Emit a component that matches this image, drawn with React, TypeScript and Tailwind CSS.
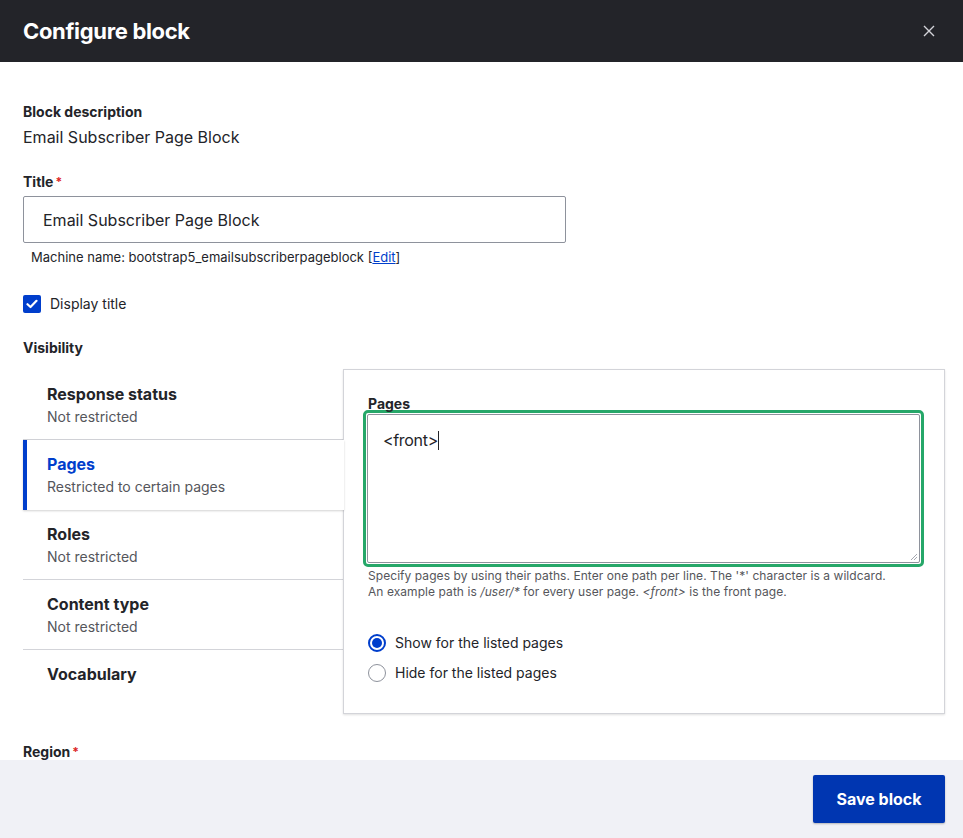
import React from 'react'

const tabs = [
  { title: 'Response status', summary: 'Not restricted' },
  { title: 'Pages', summary: 'Restricted to certain pages', active: true },
  { title: 'Roles', summary: 'Not restricted' },
  { title: 'Content type', summary: 'Not restricted' },
  { title: 'Vocabulary', summary: '' },
]

function Tab({ title, summary, active, last }: { title: string; summary: string; active?: boolean; last?: boolean }) {
  if (active) {
    return (
      <div className="relative z-10 h-[70px] bg-white border-l-4 border-[#003ecc] pl-5 pt-[14px] shadow-[0_1px_2px_rgba(0,0,0,0.18)] -mr-px">
        <div className="text-[16px] font-bold leading-[20px] text-[#003ecc]">{title}</div>
        <div className="text-[14px] leading-[20px] text-[#55565b] mt-[3px]">{summary}</div>
      </div>
    )
  }
  return (
    <div className={`h-[70px] pl-6 pt-[14px] ${last ? '' : 'border-b border-[#d3d4d9]'}`}>
      <div className="text-[16px] font-bold leading-[20px] text-[#232429]">{title}</div>
      {summary && <div className="text-[14px] leading-[20px] text-[#55565b] mt-[3px]">{summary}</div>}
    </div>
  )
}

export default function App() {
  return (
    <div className="w-[963px] h-[838px] flex flex-col bg-white text-[#232429] font-['Inter',sans-serif] overflow-hidden">
      {/* Header */}
      <div className="h-[62px] shrink-0 bg-[#232429] flex items-center justify-between pl-[23px] pr-[28px]">
        <h1 className="text-[22px] font-bold text-white tracking-[-0.015em]">Configure block</h1>
        <svg width="12" height="12" viewBox="0 0 12 12" className="text-[#d3d4d9]">
          <path d="M1 1L11 11M11 1L1 11" stroke="currentColor" strokeWidth="1.4" />
        </svg>
      </div>

      {/* Body */}
      <div className="flex-1 overflow-hidden px-[23px] pt-[40px]">
        <div className="text-[14px] font-bold leading-[20px]">Block description</div>
        <div className="text-[16px] leading-[20px] mt-[5px]">Email Subscriber Page Block</div>

        <div className="mt-[25px] text-[14px] font-bold leading-[20px] flex items-start">
          Title<span className="text-[#dc2323] ml-[2px] text-[12px]">*</span>
        </div>
        <div className="mt-[4px] w-[543px] h-[47px] border border-[#8e929c] rounded-[2px] flex items-center pl-[19px] text-[16px]">
          Email Subscriber Page Block
        </div>
        <div className="mt-[5px] ml-[8px] text-[13px] leading-[18px]">
          Machine name: bootstrap5_emailsubscriberpageblock [<span className="text-[#003ecc] underline">Edit</span>]
        </div>

        <div className="mt-[27px] flex items-center gap-[9px]">
          <div className="w-[18px] h-[18px] rounded-[2px] bg-[#003ecc] flex items-center justify-center">
            <svg width="12" height="10" viewBox="0 0 12 10">
              <path d="M1.5 5.2L4.5 8L10.5 1.8" fill="none" stroke="white" strokeWidth="2.2" strokeLinecap="round" strokeLinejoin="round" />
            </svg>
          </div>
          <span className="text-[14px]">Display title</span>
        </div>

        <div className="mt-[24px] text-[14px] font-bold leading-[20px]">Visibility</div>

        {/* Vertical tabs */}
        <div className="mt-[12px] flex">
          <div className="w-[320px] shrink-0">
            {tabs.map((t, i) => (
              <Tab key={t.title} {...t} last={i === tabs.length - 1} />
            ))}
          </div>
          <div className="flex-1 h-[345px] -mt-px border border-[#d3d4d9] bg-white shadow-[0_1px_2px_rgba(0,0,0,0.12)] pl-[24px] pr-[20px] pt-[25px]">
            <div className="text-[14px] font-bold leading-[18px]">Pages</div>
            <div className="-mt-[3px] -ml-[5px] w-[561px] h-[157px] border-[3px] border-[#26a769] rounded-[5px] p-px">
              <div className="relative w-full h-full border border-[#8e929c] rounded-[2px] pl-[15px] pt-[13px] text-[16px] tracking-[-0.02em]">
                &lt;front&gt;<span className="inline-block w-px h-[19px] bg-[#232429] align-[-4px]" />
                <svg width="8" height="8" viewBox="0 0 8 8" className="absolute right-[1px] bottom-[1px]">
                  <path d="M7 1L1 7M7 4L4 7" stroke="#8e929c" strokeWidth="0.8" />
                </svg>
              </div>
            </div>
            <div className="mt-[1px] text-[12px] leading-[16px] text-[#55565b] tracking-[0.005em]">
              Specify pages by using their paths. Enter one path per line. The '*' character is a wildcard.
              <br />
              An example path is <em>/user/*</em> for every user page. <em>&lt;front&gt;</em> is the front page.
            </div>

            <div className="mt-[33px] flex flex-col gap-[10px]">
              <div className="flex items-center gap-[9px] h-[20px]">
                <div className="w-[18px] h-[18px] rounded-full border-2 border-[#003ecc] flex items-center justify-center">
                  <div className="w-[10px] h-[10px] rounded-full bg-[#003ecc]" />
                </div>
                <span className="text-[14px] leading-[20px]">Show for the listed pages</span>
              </div>
              <div className="flex items-center gap-[9px] h-[20px]">
                <div className="w-[18px] h-[18px] rounded-full border border-[#8e929c]" />
                <span className="text-[14px] leading-[20px]">Hide for the listed pages</span>
              </div>
            </div>
          </div>
        </div>

        <div className="mt-[22px] text-[14px] font-bold leading-[20px] flex items-start">
          Region<span className="text-[#dc2323] ml-[2px] text-[12px]">*</span>
        </div>
      </div>

      {/* Footer */}
      <div className="h-[78px] shrink-0 bg-[#f0f1f6] flex items-center justify-end pr-[18px]">
        <button className="w-[132px] h-[48px] rounded-[2px] bg-[#0036b1] text-white text-[16px] font-bold shadow-[0_1px_2px_rgba(0,0,0,0.25)]">
          Save block
        </button>
      </div>
    </div>
  )
}
